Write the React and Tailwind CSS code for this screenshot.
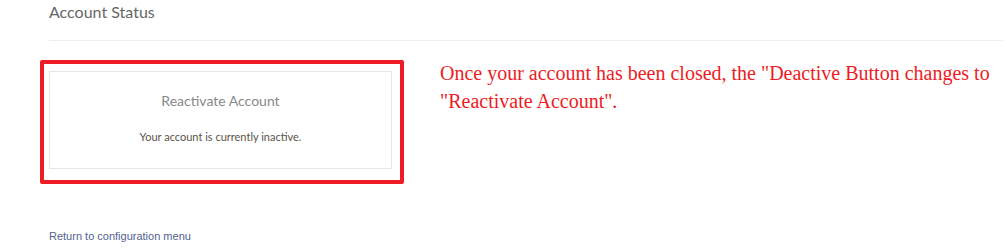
import React from 'react';

const App = () => {
  return (
    <div className="w-[1007px] h-[252px] bg-white overflow-hidden">
      <div className="pl-[49px] pr-[4px]">
        <div className="h-[41px] border-b border-[#eeeeee] pt-[2px]">
          <h2 className="text-[16px] leading-[20px] text-[#666666] font-['Lato',sans-serif]">
            Account Status
          </h2>
        </div>
      </div>

      <div className="flex items-start pl-[40px] mt-[19px]">
        <div className="w-[364px] h-[124px] shrink-0 border-4 border-[#ed1c24] rounded-[2px] pl-[5px] pt-[7px]">
          <div className="w-[343px] h-[98px] border border-[#e6e6e6] flex flex-col items-center font-['Lato',sans-serif]">
            <div className="mt-[20px] text-[14px] leading-[18px] text-[#888888]">Reactivate Account</div>
            <div className="mt-[20px] text-[11px] leading-[14px] text-[#5a5348]">
              Your account is currently inactive.
            </div>
          </div>
        </div>
        <p className="ml-[36px] -mt-[1px] text-[20px] leading-[28px] text-[#ed1c24] font-['Liberation_Serif',serif]">
          Once your account has been closed, the "Deactive Button changes to
          <br />
          "Reactivate Account".
        </p>
      </div>

      <div className="pl-[49px] mt-[38px]">
        <a href="#" className="text-[11px] leading-[14px] text-[#51628f] font-['Liberation_Sans',Arial,sans-serif]">
          Return to configuration menu
        </a>
      </div>
    </div>
  );
};

export default App;
